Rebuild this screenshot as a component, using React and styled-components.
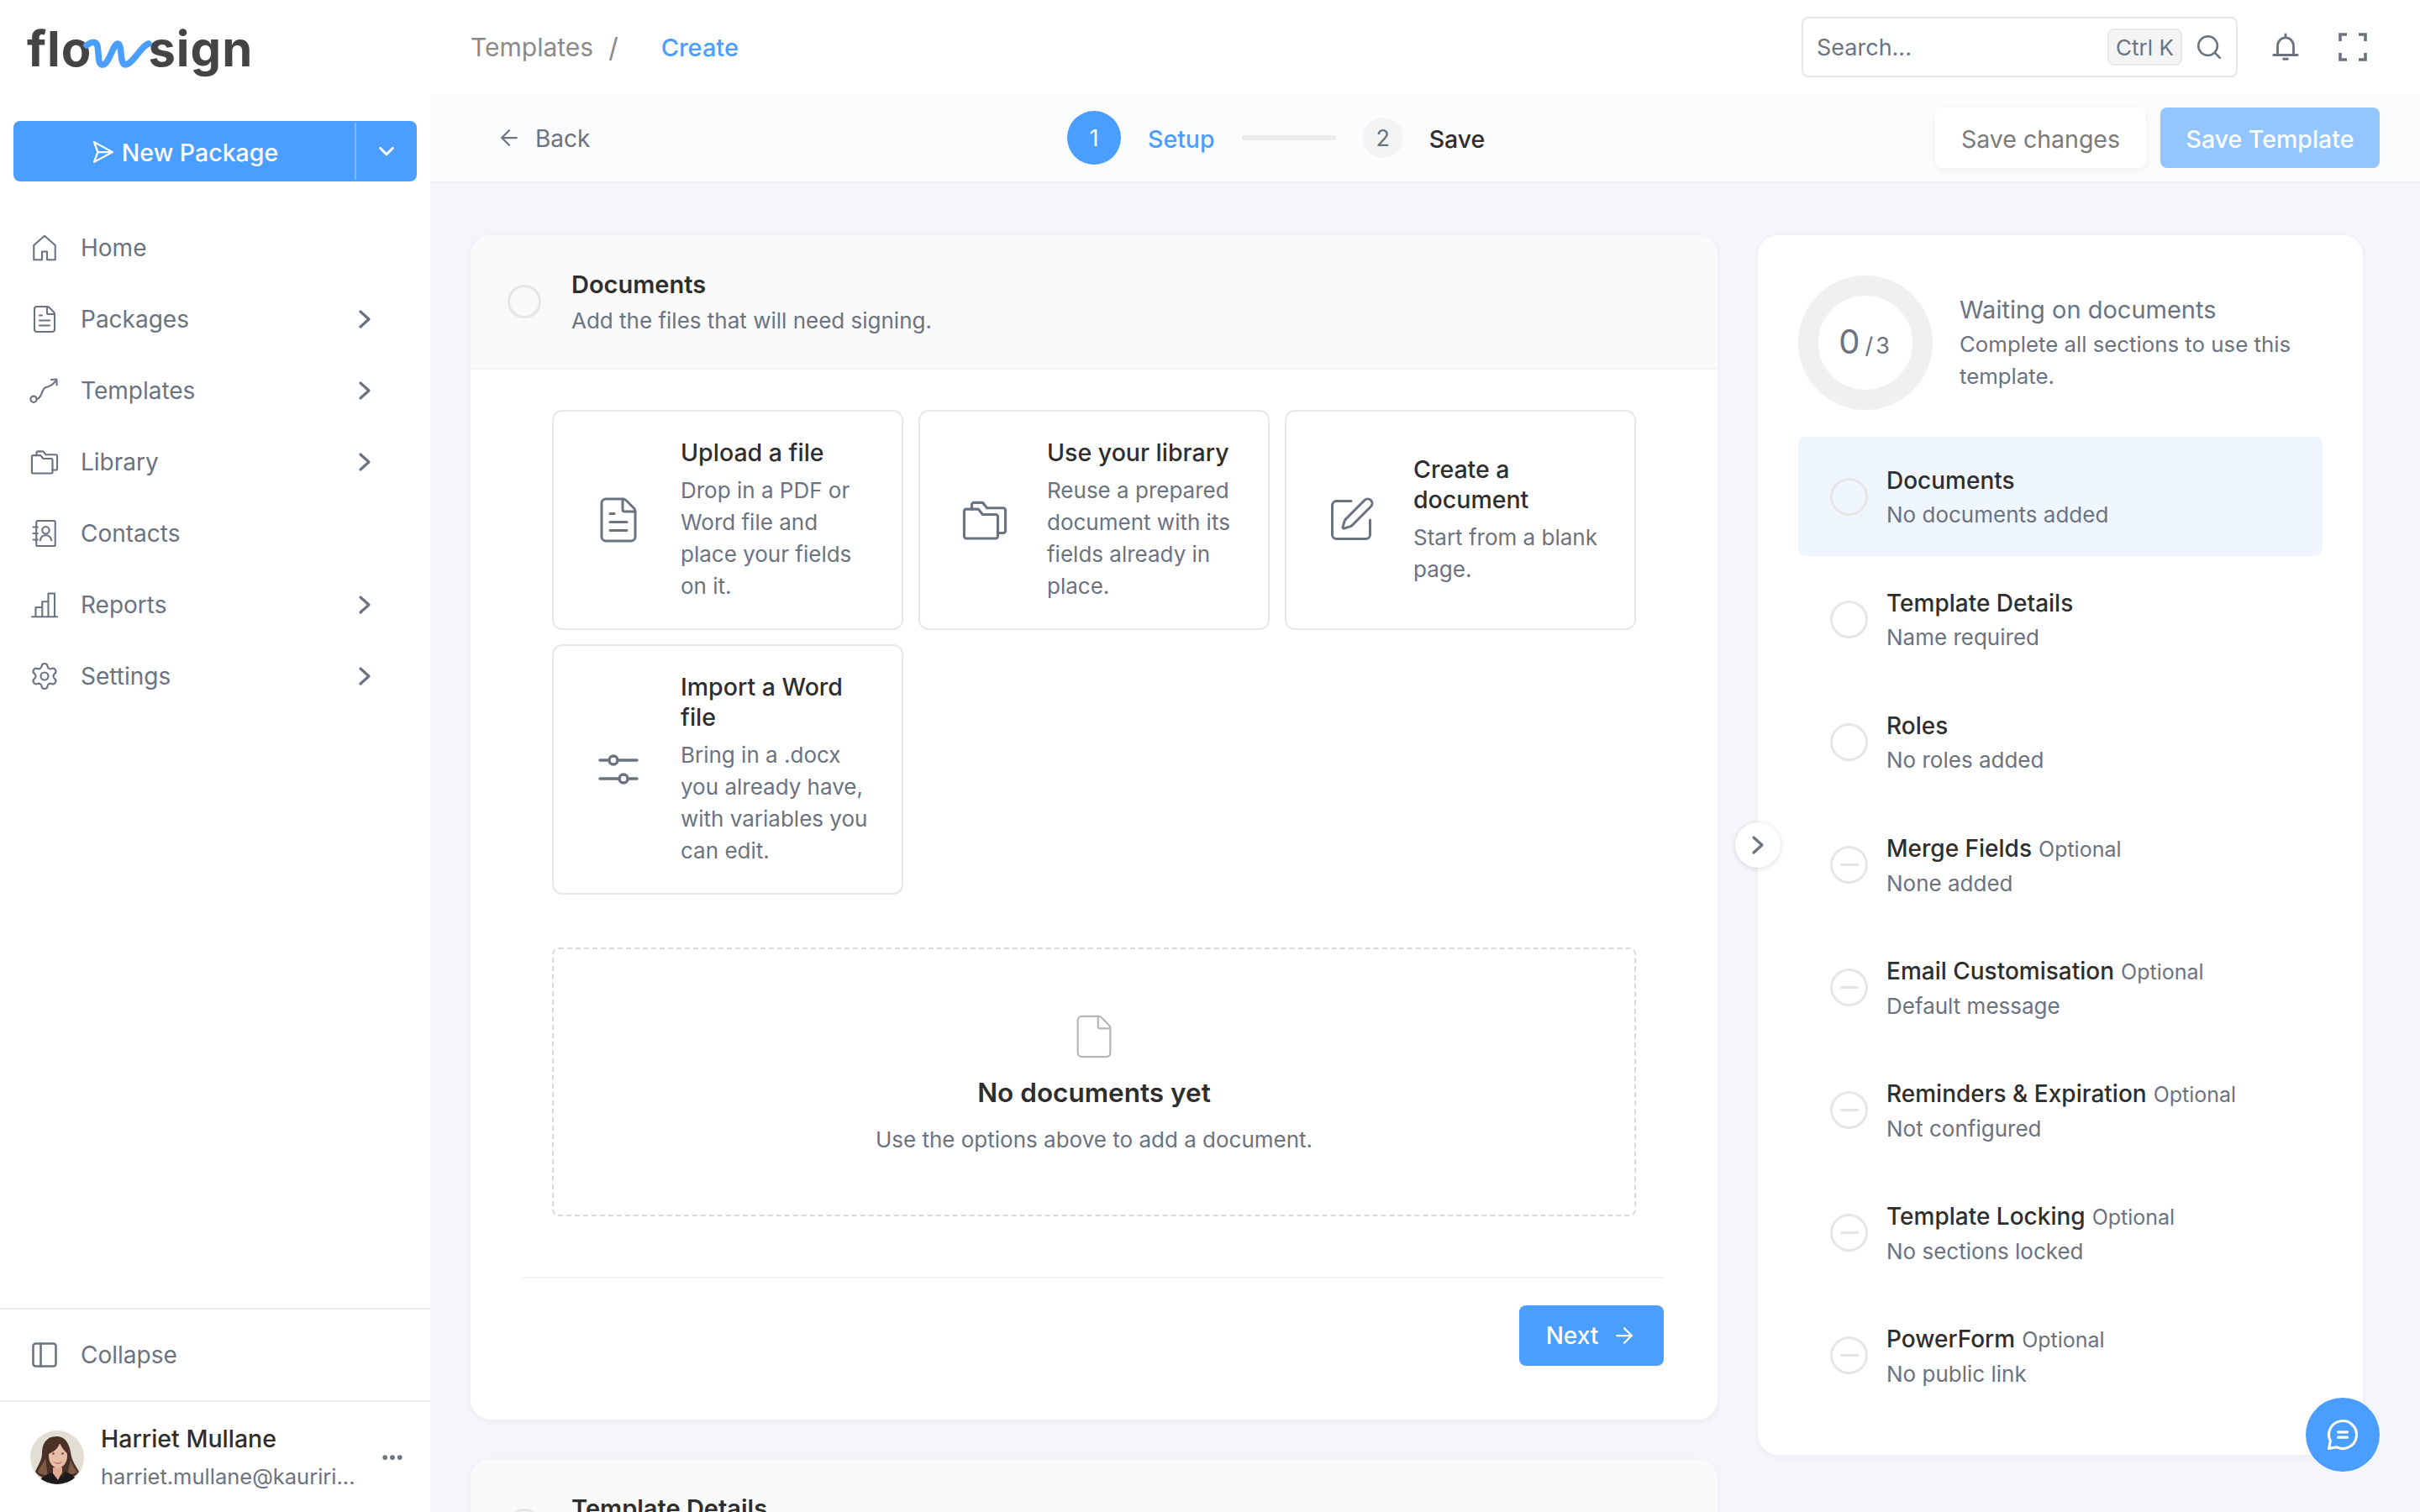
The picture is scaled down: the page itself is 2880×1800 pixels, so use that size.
import React from 'react';
import styled, { createGlobalStyle } from 'styled-components';
import {
  ArrowLeft,
  ArrowRight,
  ChevronDown,
  Ellipsis,
  File,
  FileText,
  PanelLeft,
  Search,
  Settings,
  SquarePen,
} from 'lucide-react';

// ----- style -----

const BLUE = '#4a9eff';
const DARK = '#2e2e2e';
const MUTED = '#6b7280';
const LINE = '#ececec';

const GlobalStyle = createGlobalStyle`
  html, body {
    margin: 0;
    padding: 0;
    background: #f5f6fa;
  }
  body {
    font-family: Inter, "Liberation Sans", sans-serif;
    color: ${DARK};
    -webkit-font-smoothing: antialiased;
  }
`;

const Shell = styled.div`
  display: grid;
  grid-template-columns: 512px 1fr;
  height: 100vh;
  overflow: hidden;
`;

// -- sidebar --

const Sidebar = styled.aside`
  display: flex;
  flex-direction: column;
  background: #fff;
  height: 1800px;
`;

const LogoBar = styled.div`
  height: 144px;
  padding-left: 32px;
  box-sizing: border-box;
`;

const Logo = styled.div`
  position: relative;
  display: flex;
  gap: 67px;
  width: 265px;
  padding-top: 22px;
  font-size: 58px;
  line-height: 72px;
  font-weight: 700;
  letter-spacing: 1px;
  color: #444;
`;

const LogoWave = styled.svg`
  position: absolute;
  left: 0;
  top: 33px;
`;

const SplitButton = styled.div`
  display: flex;
  height: 72px;
  margin: 0 16px;
  border-radius: 8px;
  background: ${BLUE};
  color: #fff;
`;

const SplitMain = styled.div`
  flex: 1;
  display: flex;
  align-items: center;
  justify-content: center;
  gap: 8px;
  padding-top: 2px;
  font-size: 28.5px;
  font-weight: 500;
`;

const SplitCaret = styled.div`
  width: 72px;
  display: flex;
  align-items: center;
  justify-content: center;
  border-left: 2px solid rgba(255, 255, 255, 0.3);
  margin: 2px 0;
`;

const Nav = styled.nav`
  display: flex;
  flex-direction: column;
  margin-top: 36px;
`;

const NavRow = styled.div`
  display: flex;
  align-items: center;
  height: 85px;
  padding-left: 38px;
  font-size: 28px;
  color: ${MUTED};
`;

const NavIcon = styled.span`
  display: flex;
  width: 30px;
  height: 32px;
  align-items: center;
  justify-content: center;
  margin-right: 28px;

  & > svg {
    flex: none;
  }
`;

const NavLabel = styled.span`
  flex: 1;
`;

const NavChevron = styled.span`
  display: flex;
  margin-right: 70px;
`;

const SideFooter = styled.div`
  margin-top: auto;
`;

const CollapseRow = styled(NavRow)`
  height: 110px;
  border-top: 2px solid ${LINE};
  box-sizing: border-box;
`;

const Profile = styled.div`
  display: flex;
  align-items: center;
  height: 133px;
  box-sizing: border-box;
  padding: 0 30px 0 36px;
  border-top: 2px solid ${LINE};
`;

const ProfileText = styled.div`
  flex: 1;
  margin-left: 20px;
`;

const ProfileName = styled.div`
  font-size: 28.5px;
  font-weight: 500;
  line-height: 40px;
`;

const ProfileMail = styled.div`
  margin-top: 6px;
  font-size: 25.5px;
  line-height: 38px;
  color: ${MUTED};
`;

const AvatarSvg = styled.svg`
  flex: none;
  filter: blur(0.6px);
`;

// -- gorne paski --

const Main = styled.div`
  display: flex;
  flex-direction: column;
  min-width: 0;
`;

const Topbar = styled.header`
  display: flex;
  align-items: center;
  height: 112px;
  flex: none;
  box-sizing: border-box;
  padding: 0 63px 0 48px;
  background: #fff;
`;

const Crumb = styled.span`
  font-size: ${p => (p.$active ? 29 : 30)}px;
  color: ${p => (p.$active ? BLUE : '#8a8a8a')};
  font-weight: ${p => (p.$active ? 500 : 400)};
`;

const CrumbSlash = styled.span`
  font-size: 32px;
  color: #8a8a8a;
  margin: 0 51px 0 18px;
`;

const SearchBox = styled.div`
  display: flex;
  align-items: center;
  width: 519px;
  height: 72px;
  margin-left: auto;
  box-sizing: border-box;
  padding: 0 15px 0 16px;
  border: 2px solid #e6e6e6;
  border-radius: 8px;
  font-size: 27px;
  color: ${MUTED};
`;

const SearchText = styled.span`
  flex: 1;
`;

const Kbd = styled.span`
  width: 89px;
  height: 44px;
  line-height: 42px;
  box-sizing: border-box;
  text-align: center;
  font-size: 26px;
  background: #f4f4f4;
  border: 2px solid #e8e8e8;
  border-radius: 8px;
  margin-right: 15px;
`;

const TopIcons = styled.div`
  display: flex;
  align-items: center;
  margin-left: 38px;
  gap: 44px;
  color: ${MUTED};
`;

const Subbar = styled.div`
  display: flex;
  align-items: center;
  flex: none;
  height: 106px;
  box-sizing: border-box;
  padding: 0 48px 0 79px;
  background: #fbfcfe;
  border-bottom: 2px solid #eeeff2;
`;

const Back = styled.div`
  display: flex;
  align-items: center;
  gap: 16px;
  width: 113px;
  font-size: 28px;
  color: ${MUTED};
`;

const BackText = styled.span`
  padding-top: 2px;
`;

const Stepper = styled.div`
  display: flex;
  align-items: center;
  margin-left: 566px;
  font-size: 28.5px;
  font-weight: 500;
`;

const StepDot = styled.span`
  display: flex;
  align-items: center;
  justify-content: center;
  width: ${p => (p.$active ? 64 : 48)}px;
  height: ${p => (p.$active ? 64 : 48)}px;
  border-radius: 50%;
  background: ${p => (p.$active ? BLUE : '#f3f3f3')};
  color: ${p => (p.$active ? '#fff' : MUTED)};
  font-size: 27px;
  font-weight: 400;
`;

const StepLabel = styled.span`
  margin-left: ${p => (p.$active ? 32 : 31)}px;
  padding-top: 2px;
  color: ${p => (p.$active ? BLUE : DARK)};
`;

const StepLine = styled.span`
  width: 112px;
  height: 6px;
  border-radius: 2px;
  background: ${LINE};
  margin: 0 32px;
`;

const Actions = styled.div`
  display: flex;
  gap: 17px;
  margin-left: auto;
`;

const ActionButton = styled.div`
  display: flex;
  align-items: center;
  justify-content: center;
  width: ${p => p.$w}px;
  height: 72px;
  box-sizing: border-box;
  padding-top: 2px;
  border-radius: 8px;
  font-size: 28.5px;
  font-weight: ${p => (p.$primary ? 500 : 400)};
  background: ${p => (p.$primary ? '#93c5ff' : '#fff')};
  color: ${p => (p.$primary ? '#fff' : '#7a7a7a')};
  box-shadow: ${p => (p.$primary ? 'none' : '0 2px 8px rgba(0,0,0,0.06)')};
`;

// -- zawartosc --

const Content = styled.div`
  flex: 1;
  min-height: 0;
  overflow: hidden;
  display: grid;
  grid-template-columns: 1484px 720px;
  column-gap: 48px;
  align-items: start;
  padding: 62px 0 0 48px;
`;

const Stack = styled.div`
  display: flex;
  flex-direction: column;
  gap: 47px;
`;

const Section = styled.section`
  background: #fff;
  border-radius: 24px;
  overflow: hidden;
  box-shadow: 0 2px 10px rgba(30, 40, 70, 0.05);
`;

const SectionHead = styled.div`
  display: flex;
  align-items: center;
  gap: 36px;
  height: 160px;
  padding-left: 44px;
  background: #fafafa;
  border-bottom: 2px solid #f3f3f3;
  box-sizing: border-box;
`;

const SectionTitle = styled.div`
  margin-top: 2px;
  font-size: 29px;
  font-weight: 600;
  line-height: 40px;
`;

const SectionSub = styled.div`
  margin-top: 4px;
  font-size: 26px;
  line-height: 38px;
  color: ${MUTED};
`;

const Ring = styled.span`
  display: flex;
  align-items: center;
  justify-content: center;
  flex: none;
  width: ${p => p.$size}px;
  height: ${p => p.$size}px;
  box-sizing: border-box;
  border: 3px solid #e6e6e6;
  border-radius: 50%;
`;

const RingMinus = styled.span`
  width: 22px;
  height: 3px;
  border-radius: 2px;
  background: #e4e4e4;
`;

const SectionBody = styled.div`
  padding: 48px 97px 0;
`;

const OptionGrid = styled.div`
  display: grid;
  grid-template-columns: repeat(3, 1fr);
  gap: 17px 18px;
`;

const OptionCard = styled.div`
  display: flex;
  align-items: center;
  box-sizing: border-box;
  padding: 31px 0 31px 54px;
  border: 2px solid #e8e8e8;
  border-radius: 12px;
  background: #fff;
`;

const OptionIcon = styled.div`
  display: flex;
  justify-content: center;
  flex: none;
  width: 46px;
  margin-right: 51px;
  color: ${MUTED};

  & > svg {
    flex: none;
  }
`;

const OptionTitle = styled.div`
  font-size: 28.5px;
  font-weight: 500;
  line-height: 36px;
  white-space: pre-line;
  margin-bottom: 8px;
`;

const OptionDesc = styled.div`
  font-size: 26px;
  line-height: 38px;
  white-space: pre-line;
  color: ${MUTED};
`;

const DropZone = styled.div`
  display: flex;
  flex-direction: column;
  align-items: center;
  height: 320px;
  margin-top: 63px;
  box-sizing: border-box;
  padding-top: 75px;
  border: 2px dashed #d9d9d9;
  border-radius: 8px;
`;

const DropTitle = styled.div`
  margin-top: 16px;
  font-size: 31.5px;
  font-weight: 600;
  line-height: 44px;
`;

const DropText = styled.div`
  margin-top: 15px;
  font-size: 26px;
  line-height: 38px;
  color: ${MUTED};
`;

const SectionFoot = styled.div`
  display: flex;
  justify-content: flex-end;
  margin: 72px 64px 0 62px;
  padding: 32px 0 64px;
  border-top: 2px solid #f3f3f5;
`;

const NextButton = styled.div`
  display: flex;
  align-items: center;
  justify-content: center;
  gap: 16px;
  width: 172px;
  height: 72px;
  border-radius: 8px;
  background: ${BLUE};
  color: #fff;
  font-size: 28px;
  font-weight: 500;
`;

// -- panel po prawej --

const PanelWrap = styled.div`
  position: relative;
`;

const Panel = styled.div`
  background: #fff;
  border-radius: 24px;
  padding: 48px;
  box-shadow: 0 2px 10px rgba(30, 40, 70, 0.05);
`;

const Summary = styled.div`
  display: flex;
  align-items: center;
  gap: 32px;
  margin-bottom: 32px;
`;

const Donut = styled.div`
  display: flex;
  align-items: baseline;
  justify-content: center;
  flex: none;
  width: 160px;
  height: 160px;
  box-sizing: border-box;
  border: 24px solid #f0f0f0;
  border-radius: 50%;
  line-height: 110px;
  color: ${MUTED};
  font-size: 27px;
`;

const DonutBig = styled.span`
  font-size: 40px;
  margin-right: 6px;
`;

const DonutRest = styled.span`
  letter-spacing: 3px;
`;

const SummaryTitle = styled.div`
  margin-top: -2px;
  font-size: 29px;
  font-weight: 400;
  line-height: 44px;
  color: ${MUTED};
`;

const SummaryDesc = styled.div`
  font-size: 25.8px;
  line-height: 38px;
  color: ${MUTED};
`;

const StepList = styled.div`
  display: flex;
  flex-direction: column;
  gap: 4px;
`;

const StepItem = styled.div`
  display: flex;
  align-items: center;
  gap: 22px;
  height: 142px;
  padding-left: 38px;
  border-radius: 8px;
  background: ${p => (p.$active ? '#f0f6ff' : 'transparent')};
`;

const StepTitle = styled.div`
  margin-top: 2px;
  font-size: 28px;
  font-weight: 500;
  line-height: 40px;
`;

const StepOptional = styled.span`
  margin-left: 8px;
  font-size: 25px;
  font-weight: 400;
  color: ${MUTED};
`;

const StepSub = styled.div`
  padding-top: 2px;
  font-size: 26px;
  line-height: 38px;
  color: ${MUTED};
`;

const PanelToggle = styled.div`
  position: absolute;
  left: -27px;
  top: 699px;
  display: flex;
  align-items: center;
  justify-content: center;
  width: 54px;
  height: 54px;
  border-radius: 50%;
  background: #fff;
  box-shadow: 0 1px 6px rgba(0, 0, 0, 0.14);
`;

const ChatFab = styled.div`
  position: fixed;
  right: 48px;
  bottom: 48px;
  display: flex;
  align-items: center;
  justify-content: center;
  width: 88px;
  height: 88px;
  border-radius: 50%;
  background: ${BLUE};
`;

// ----- ikonki -----

const Stroke = ({ size = 36, w = 1.4, color = 'currentColor', children }) => (
  <svg width={size} height={size} viewBox="0 0 24 24" fill="none" stroke={color} strokeWidth={w} strokeLinecap="round" strokeLinejoin="round">
    {children}
  </svg>
);

const ChevronIcon = ({ color = MUTED }) => (
  <svg width="16" height="24" viewBox="0 0 16 24" fill="none" stroke={color} strokeWidth="3.2" strokeLinecap="round" strokeLinejoin="round">
    <path d="M3 3l10 9-10 9" />
  </svg>
);

const HomeIcon = () => (
  <Stroke>
    <path d="M12 2.500 3.500 10v11.500H10V15h4v6.500h6.500V10z" />
  </Stroke>
);

const RouteIcon = () => (
  <Stroke size={38} w={1.350}>
    <circle cx="3.800" cy="18.500" r="2.300" />
    <path d="M6.100 18.500c4.200-.5 3.400-8 7-9 2.400-.6 4.500-1 7.100-4.500" />
    <path d="M17 3.800l4-.3.300 4.200" />
  </Stroke>
);

const FoldersIcon = ({ size = 38, w = 1.350 }) => (
  <Stroke size={size} w={w}>
    <path d="M2.500 9v10.500a1 1 0 0 0 1 1H17a1 1 0 0 0 1-1V10.500a1 1 0 0 0-1-1h-6L9 7H3.500a1 1 0 0 0-1 1z" />
    <path d="M6 7V5a1 1 0 0 1 1-1h4l2 2.500h7.500a1 1 0 0 1 1 1V17a1 1 0 0 1-1 1H18" />
  </Stroke>
);

const ContactsIcon = () => (
  <Stroke>
    <rect x="5.500" y="2" width="15" height="20" rx="1" />
    <circle cx="13" cy="9.500" r="2.800" />
    <path d="M8.500 17.500c.6-2.900 2.400-4 4.500-4s3.900 1.100 4.500 4M3 7h3.500M3 12h3.500M3 17h3.500" />
  </Stroke>
);

const ReportsIcon = () => (
  <Stroke>
    <path d="M2 21.500h20M5 21.500V14h5.200v7.500M15 21.500V3h5v18.500M10.200 14V9.500H15" />
  </Stroke>
);

const SendIcon = () => (
  <Stroke size={30} color="#fff" w={1.800}>
    <path d="M4 2.500 21.500 12 4 21.500 7.500 12zM7.500 12h14" />
  </Stroke>
);

const BellIcon = () => (
  <Stroke size={38} w={1.800}>
    <path d="M12 2.500v2.200M6 18v-7a6 6 0 0 1 12 0v7M3 18h18M10.500 21h3" />
  </Stroke>
);

const FullscreenIcon = () => (
  <svg width="34" height="34" viewBox="0 0 34 34" fill="none" stroke={MUTED} strokeWidth="3.600">
    <path d="M2 10V2h8M24 2h8v8M32 24v8h-8M10 32H2v-8" />
  </svg>
);

const SlidersIcon = () => (
  <Stroke size={48} w={1.700}>
    <circle cx="9" cy="6.500" r="2.500" />
    <circle cx="15" cy="17.500" r="2.500" />
    <path d="M1 6.500h5.500M11.500 6.500H23M1 17.500h11.500M17.500 17.500H23" />
  </Stroke>
);

const ChatIcon = () => (
  <Stroke size={44} color="#fff" w={1.700}>
    <path d="M7.900 20A9 9 0 1 0 4 16.100L3 21z" />
    <path d="M9 10.300h6M9 13.700h6" />
  </Stroke>
);

const Avatar = () => (
  <AvatarSvg width="64" height="64" viewBox="0 0 64 64">
    <defs>
      <clipPath id="avatarClip">
        <circle cx="32" cy="32" r="32" />
      </clipPath>
    </defs>
    <g clipPath="url(#avatarClip)">
      <rect width="64" height="64" fill="#e2ded3" />
      <path d="M31 7C19 7 14 16 14 27c0 9-5 14-8 22 4 6 10 9 26 9s22-3 26-9c-4-7-7-11-9-18C47 17 43 7 31 7z" fill="#4a3026" />
      <path d="M9 50c3-8 7-11 9-17l3 22zM56 50c-3-6-7-10-8-16l-4 20z" fill="#7f5a44" />
      <path d="M8 64c4-9 12-12 18-14h8l4 5 3-6c8 2 13 6 17 15z" fill="#1d1a1b" />
      <path d="M27 44h11v6l-5 9-6-8z" fill="#e0ab93" />
      <ellipse cx="33" cy="30" rx="11" ry="14.500" fill="#e9bda6" />
      <path d="M21 28c6-2 12-6 14-13 3 6 6 10 10 13l1-9-9-8-13 1-6 9z" fill="#4a3026" />
      <path d="M27 36.500c3.500 2 8.500 2 12 0-2 4.500-10 4.500-12 0z" fill="#c47d80" />
      <circle cx="27.500" cy="27.500" r="1.200" fill="#5b4036" />
      <circle cx="38.500" cy="27.500" r="1.200" fill="#5b4036" />
    </g>
  </AvatarSvg>
);

// ----- dane -----

const navItems = [
  { label: 'Home', icon: <HomeIcon /> },
  { label: 'Packages', icon: <FileText size={36} strokeWidth={1.400} />, more: true },
  { label: 'Templates', icon: <RouteIcon />, more: true },
  { label: 'Library', icon: <FoldersIcon />, more: true },
  { label: 'Contacts', icon: <ContactsIcon /> },
  { label: 'Reports', icon: <ReportsIcon />, more: true },
  { label: 'Settings', icon: <Settings size={36} strokeWidth={1.400} />, more: true },
];

const options = [
  {
    title: 'Upload a file',
    desc: 'Drop in a PDF or\nWord file and\nplace your fields\non it.',
    icon: <FileText size={60} strokeWidth={1.200} />,
  },
  {
    title: 'Use your library',
    desc: 'Reuse a prepared\ndocument with its\nfields already in\nplace.',
    icon: <FoldersIcon size={62} w={1.200} />,
  },
  {
    title: 'Create a\ndocument',
    desc: 'Start from a blank\npage.',
    icon: <SquarePen size={60} strokeWidth={1.200} />,
  },
  {
    title: 'Import a Word\nfile',
    desc: 'Bring in a .docx\nyou already have,\nwith variables you\ncan edit.',
    icon: <SlidersIcon />,
  },
];

const steps = [
  { title: 'Documents', sub: 'No documents added', active: true },
  { title: 'Template Details', sub: 'Name required' },
  { title: 'Roles', sub: 'No roles added' },
  { title: 'Merge Fields', sub: 'None added', optional: true },
  { title: 'Email Customisation', sub: 'Default message', optional: true },
  { title: 'Reminders & Expiration', sub: 'Not configured', optional: true },
  { title: 'Template Locking', sub: 'No sections locked', optional: true },
  { title: 'PowerForm', sub: 'No public link', optional: true },
];

// ----- komponent -----

export default function App() {
  return (
    <>
      <GlobalStyle />
      <Shell>
        <Sidebar>
          <LogoBar>
            <Logo>
              <span>flo</span>
              <span>sign</span>
              <LogoWave width="150" height="50" viewBox="0 0 150 50" fill="none">
                <path
                  d="M71 21C76 17 82 15 84 22C86 32 84 44 90 44C98 44 102 20 108 19C114 19 110 44 117 44C126 44 136 21 145 19"
                  stroke={BLUE}
                  strokeWidth="7.500"
                  strokeLinecap="round"
                />
              </LogoWave>
            </Logo>
          </LogoBar>
          <SplitButton>
            <SplitMain>
              <SendIcon />
              New Package
            </SplitMain>
            <SplitCaret>
              <ChevronDown size={30} strokeWidth={2.400} />
            </SplitCaret>
          </SplitButton>
          <Nav>
            {navItems.map(item => (
              <NavRow key={item.label}>
                <NavIcon>{item.icon}</NavIcon>
                <NavLabel>{item.label}</NavLabel>
                {item.more && (
                  <NavChevron>
                    <ChevronIcon />
                  </NavChevron>
                )}
              </NavRow>
            ))}
          </Nav>
          <SideFooter>
            <CollapseRow>
              <NavIcon>
                <PanelLeft size={36} strokeWidth={1.700} />
              </NavIcon>
              <NavLabel>Collapse</NavLabel>
            </CollapseRow>
            <Profile>
              <Avatar />
              <ProfileText>
                <ProfileName>Harriet Mullane</ProfileName>
                <ProfileMail>harriet.mullane@kauriri...</ProfileMail>
              </ProfileText>
              <Ellipsis size={30} strokeWidth={2.600} color={MUTED} />
            </Profile>
          </SideFooter>
        </Sidebar>

        <Main>
          <Topbar>
            <Crumb>Templates</Crumb>
            <CrumbSlash>/</CrumbSlash>
            <Crumb $active>Create</Crumb>
            <SearchBox>
              <SearchText>Search...</SearchText>
              <Kbd>Ctrl K</Kbd>
              <Search size={34} strokeWidth={1.800} />
            </SearchBox>
            <TopIcons>
              <BellIcon />
              <FullscreenIcon />
            </TopIcons>
          </Topbar>

          <Subbar>
            <Back>
              <ArrowLeft size={30} strokeWidth={1.800} />
              <BackText>Back</BackText>
            </Back>
            <Stepper>
              <StepDot $active>1</StepDot>
              <StepLabel $active>Setup</StepLabel>
              <StepLine />
              <StepDot>2</StepDot>
              <StepLabel>Save</StepLabel>
            </Stepper>
            <Actions>
              <ActionButton $w={251}>Save changes</ActionButton>
              <ActionButton $w={261} $primary>Save Template</ActionButton>
            </Actions>
          </Subbar>

          <Content>
            <Stack>
              <Section>
                <SectionHead>
                  <Ring $size={40} />
                  <div>
                    <SectionTitle>Documents</SectionTitle>
                    <SectionSub>Add the files that will need signing.</SectionSub>
                  </div>
                </SectionHead>
                <SectionBody>
                  <OptionGrid>
                    {options.map(opt => (
                      <OptionCard key={opt.title}>
                        <OptionIcon>{opt.icon}</OptionIcon>
                        <div>
                          <OptionTitle>{opt.title}</OptionTitle>
                          <OptionDesc>{opt.desc}</OptionDesc>
                        </div>
                      </OptionCard>
                    ))}
                  </OptionGrid>
                  <DropZone>
                    <File size={58} strokeWidth={0.900} color="#b5b5b5" />
                    <DropTitle>No documents yet</DropTitle>
                    <DropText>Use the options above to add a document.</DropText>
                  </DropZone>
                </SectionBody>
                <SectionFoot>
                  <NextButton>
                    Next
                    <ArrowRight size={30} strokeWidth={1.800} />
                  </NextButton>
                </SectionFoot>
              </Section>
              <Section>
                <SectionHead>
                  <Ring $size={40} />
                  <div>
                    <SectionTitle>Template Details</SectionTitle>
                    <SectionSub>&nbsp;</SectionSub>
                  </div>
                </SectionHead>
              </Section>
            </Stack>

            <PanelWrap>
              <Panel>
                <Summary>
                  <Donut>
                    <DonutBig>0</DonutBig>
                    <DonutRest>/3</DonutRest>
                  </Donut>
                  <div>
                    <SummaryTitle>Waiting on documents</SummaryTitle>
                    <SummaryDesc>
                      Complete all sections to use this
                      <br />
                      template.
                    </SummaryDesc>
                  </div>
                </Summary>
                <StepList>
                  {steps.map(step => (
                    <StepItem key={step.title} $active={step.active}>
                      <Ring $size={45}>{step.optional && <RingMinus />}</Ring>
                      <div>
                        <StepTitle>
                          {step.title}
                          {step.optional && <StepOptional>Optional</StepOptional>}
                        </StepTitle>
                        <StepSub>{step.sub}</StepSub>
                      </div>
                    </StepItem>
                  ))}
                </StepList>
              </Panel>
              <PanelToggle>
                <ChevronIcon />
              </PanelToggle>
            </PanelWrap>
          </Content>
        </Main>
      </Shell>
      <ChatFab>
        <ChatIcon />
      </ChatFab>
    </>
  );
}
